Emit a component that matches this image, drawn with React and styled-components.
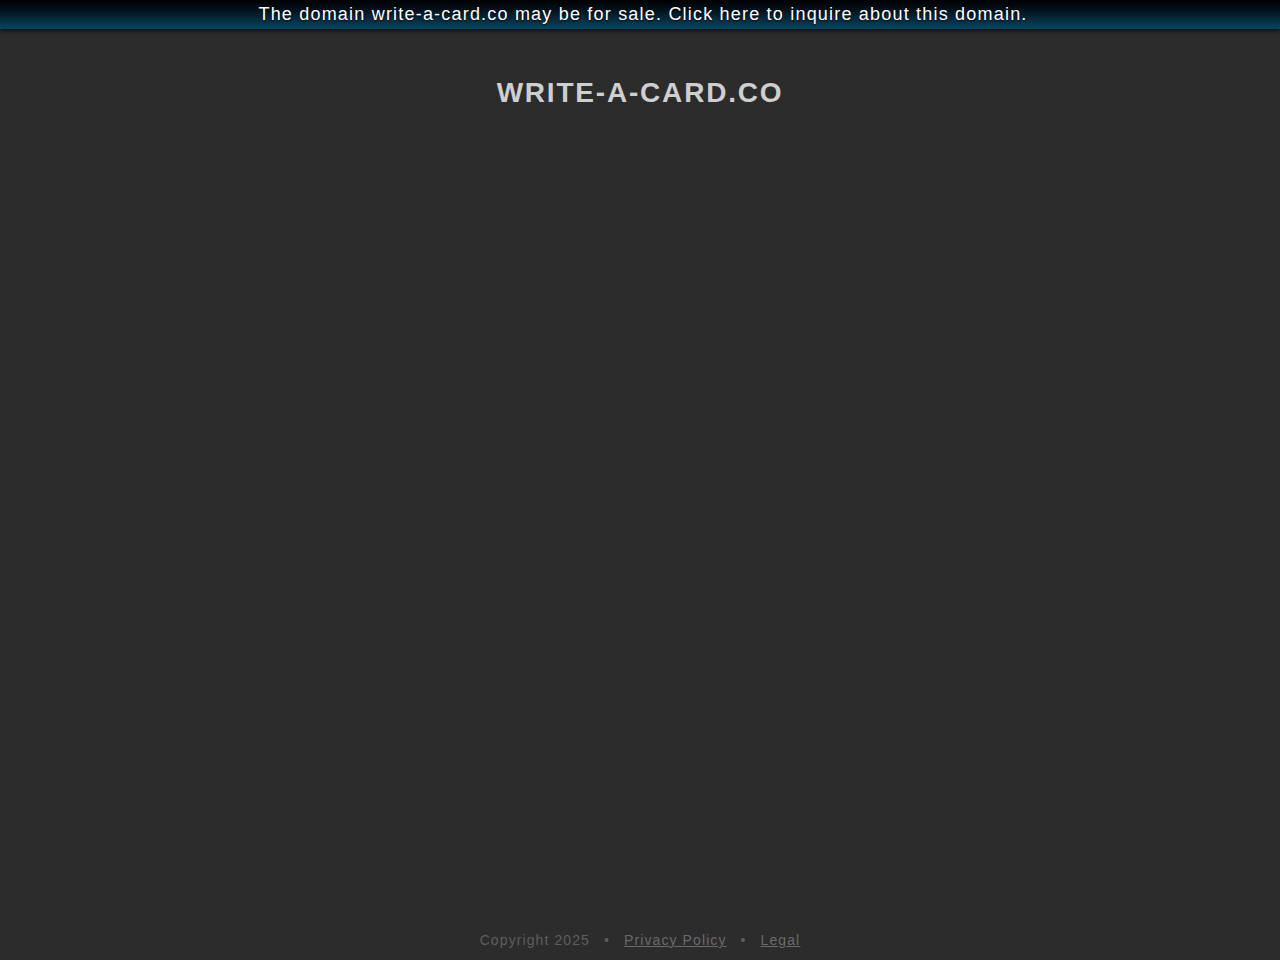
import React from 'react'
import styled, { createGlobalStyle } from 'styled-components'

const Global = createGlobalStyle`
  html, body {
    margin: 0;
    padding: 0;
    height: 100%;
    background: #2c2c2c;
    font-family: "Liberation Sans", Arial, sans-serif;
  }
  #root {
    min-height: 100%;
  }
`

const Page = styled.div`
  display: flex;
  flex-direction: column;
  min-height: 960px;
  background: #2c2c2c;
`

const SaleBar = styled.a`
  display: block;
  height: 29px;
  line-height: 28px;
  padding-left: 6px;
  text-align: center;
  color: #ffffff;
  font-size: 18px;
  letter-spacing: 1.2px;
  text-decoration: none;
  text-shadow: 0 1px 2px rgba(0, 0, 0, 0.8);
  background: linear-gradient(to bottom, #000000 0%, #02121d 35%, #053249 75%, #08435f 100%);
  box-shadow: 0 2px 5px rgba(0, 0, 0, 0.7);
  position: relative;
  z-index: 1;
`

const Title = styled.h1`
  margin: 48px 0 0;
  text-align: center;
  font-size: 28px;
  font-weight: bold;
  letter-spacing: 1.8px;
  color: #cfcfcf;
  line-height: 32px;
`

const Spacer = styled.div`
  flex: 1;
`

const Footer = styled.footer`
  display: flex;
  justify-content: center;
  align-items: center;
  gap: 12px;
  padding-bottom: 12px;
  font-size: 14px;
  letter-spacing: 1.1px;
  color: #5e5e5e;
  line-height: 16px;
`

const FooterLink = styled.a`
  color: #6a6a6a;
  text-decoration: underline;
`

const Dot = styled.span`
  color: #5e5e5e;
  padding: 0 2px;
`

export default function App() {
  return (
    <Page>
      <Global />
      <SaleBar href="#">
        The domain write-a-card.co may be for sale. Click here to inquire about this domain.
      </SaleBar>
      <Title>WRITE-A-CARD.CO</Title>
      <Spacer />
      <Footer>
        <span>Copyright 2025</span>
        <Dot>•</Dot>
        <FooterLink href="#">Privacy Policy</FooterLink>
        <Dot>•</Dot>
        <FooterLink href="#">Legal</FooterLink>
      </Footer>
    </Page>
  )
}
